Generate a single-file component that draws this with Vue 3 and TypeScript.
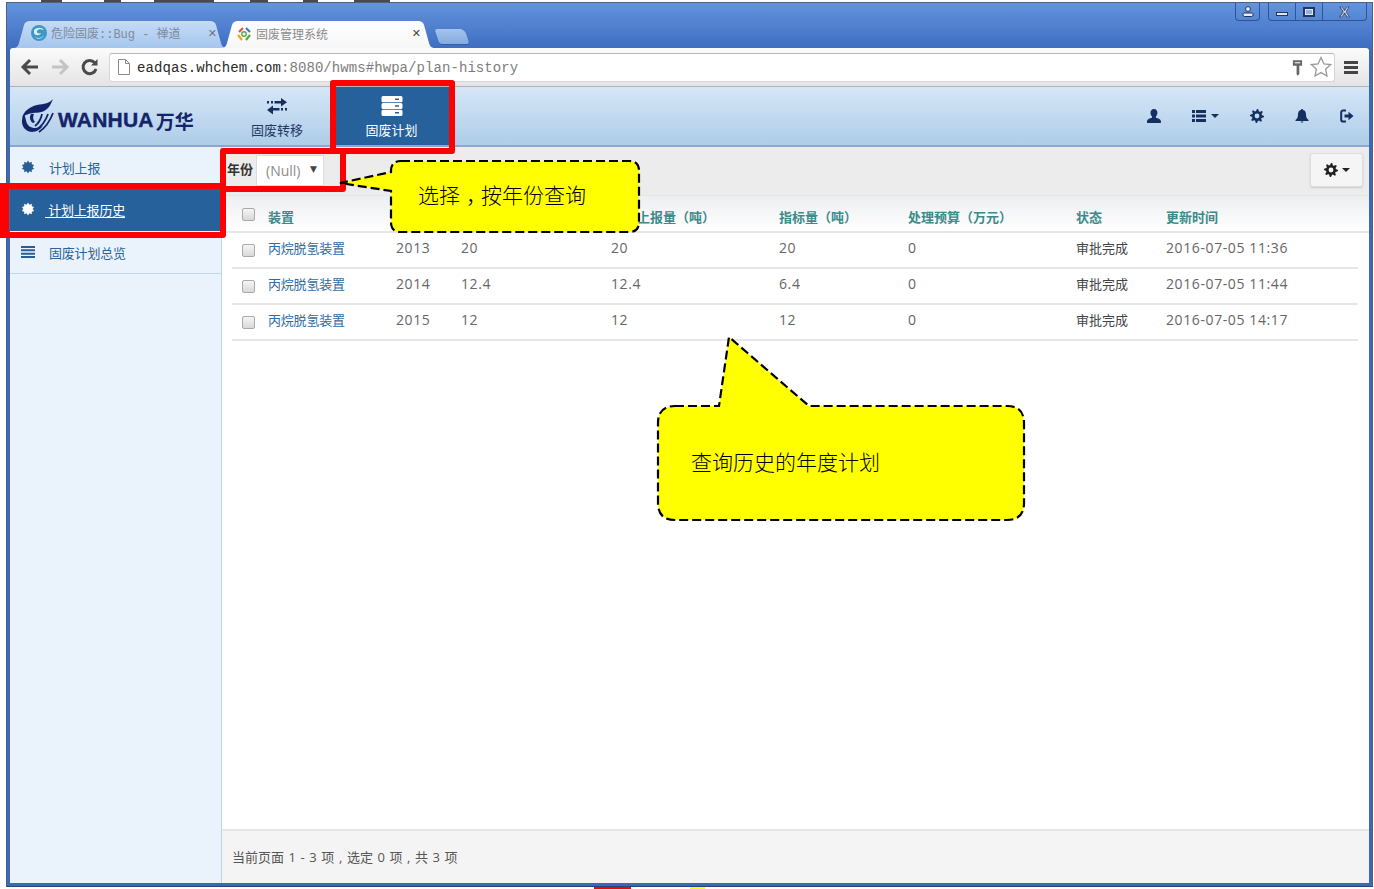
<script setup lang="ts">
type PlanRow = {
  year: string;
  planned: string;
  reported: string;
  quota: string;
  budget: string;
  updated: string;
};

const rows: PlanRow[] = [
  { year: "2013", planned: "20", reported: "20", quota: "20", budget: "0", updated: "2016-07-05 11:36" },
  { year: "2014", planned: "12.4", reported: "12.4", quota: "6.4", budget: "0", updated: "2016-07-05 11:44" },
  { year: "2015", planned: "12", reported: "12", quota: "12", budget: "0", updated: "2016-07-05 14:17" },
];

// star-like outline centred on 0,0, used for the gear and the sidebar burst
function burst(points: number[]): string {
  const step = (Math.PI * 2) / points.length;
  const coords = points.map((r, i) => {
    const a = step * i - Math.PI / 2;
    return `${(Math.cos(a) * r).toFixed(2)} ${(Math.sin(a) * r).toFixed(2)}`;
  });
  return `M${coords.join("L")}Z`;
}

const gearOuter = burst(Array.from({ length: 32 }, (_, i) => (i % 4 < 2 ? 7 : 5)));
const gearPath = `${gearOuter}M0 -2.4A2.4 2.4 0 1 0 0 2.4A2.4 2.4 0 1 0 0 -2.4Z`;
const burstPath = burst(Array.from({ length: 20 }, (_, i) => (i % 2 === 0 ? 6.5 : 4.6)));
</script>

<template>
  <div class="screen">
    <div class="window">
      <div class="titlebar">
        <div class="tabs">
          <div class="tab tab-idle">
            <svg class="tab-icon" viewBox="0 0 16 16">
              <circle cx="8" cy="8" r="8" fill="#3f97c4" />
              <path d="M3 5c3-3 8-3 10 0-3-1-6-1-7 1s2 3 4 2c-1 3-6 3-7 0z" fill="#d6eef7" />
              <path d="M4 12c3 2 7 1 9-2-1 4-7 5-9 2z" fill="#bfe3f0" />
            </svg>
            <span class="tab-title">危险固废::Bug - 禅道</span>
            <span class="tab-close">✕</span>
          </div>
          <div class="tab tab-active">
            <svg class="tab-icon" viewBox="0 0 16 16" fill="none" stroke-width="2.2">
              <path d="M3 6l4-4" stroke="#d9534f" />
              <path d="M10 2l4 4" stroke="#3c78c8" />
              <path d="M14 9l-4 5" stroke="#5aa845" />
              <path d="M6 14l-4-5" stroke="#e8a820" />
              <circle cx="8" cy="8" r="2.2" stroke="#5aa845" stroke-width="1.4" />
            </svg>
            <span class="tab-title">固废管理系统</span>
            <span class="tab-close dark">✕</span>
          </div>
          <div class="tab-new"></div>
        </div>
        <div class="controls">
          <div class="ctl-user">
            <svg width="12" height="11" viewBox="0 0 12 11">
              <circle cx="6" cy="3" r="2.4" fill="#e8edf6" stroke="#22355f" />
              <rect x="1" y="7" width="10" height="3.5" rx="1.5" fill="#e8edf6" stroke="#22355f" />
            </svg>
          </div>
          <div class="ctl-group">
            <div class="ctl ctl-min"><span></span></div>
            <div class="ctl ctl-max"><span></span></div>
            <div class="ctl ctl-close">X</div>
          </div>
        </div>
      </div>

      <div class="browserbar">
        <svg class="bar-icon" viewBox="0 0 20 20" fill="none" stroke="#4a4a4a" stroke-width="3">
          <path d="M18 10H4M10 3l-7 7 7 7" />
        </svg>
        <svg class="bar-icon" viewBox="0 0 20 20" fill="none" stroke="#c4c4c4" stroke-width="3">
          <path d="M2 10h14M10 3l7 7-7 7" />
        </svg>
        <svg class="bar-icon" viewBox="0 0 20 20" fill="none" stroke="#4a4a4a" stroke-width="3">
          <path d="M16 12a6.6 6.6 0 1 1-1.4-6.4" />
          <path d="M17.5 2v6.5H11" fill="#4a4a4a" stroke="none" />
        </svg>
        <div class="omnibox">
          <svg class="page-icon" viewBox="0 0 14 18" fill="#fff" stroke="#8a8a8a">
            <path d="M1.5 1.5h7l4 4v11h-11zM8.5 1.5v4h4" />
          </svg>
          <span class="url"><span class="url-host">eadqas.whchem.com</span>:8080/hwms#hwpa/plan-history</span>
          <svg class="key-icon" viewBox="0 0 12 18">
            <path d="M1 1h10v6H8v9l-2 2-1-2V7H1z" fill="#666" />
            <rect x="3" y="3" width="6" height="1.5" fill="#ddd" />
          </svg>
          <svg class="star-icon" viewBox="0 0 22 22" fill="#fff" stroke="#9a9a9a" stroke-width="1.3">
            <path d="M11 1.5l2.9 6.3 6.7.8-5 4.6 1.4 6.8L11 16.6 5 20l1.4-6.8-5-4.6 6.7-.8z" />
          </svg>
        </div>
        <div class="hamburger"><span></span><span></span><span></span></div>
      </div>

      <header class="appbar">
        <div class="logo">
          <svg class="logo-mark" viewBox="0 0 34 34" fill="#14246a">
            <path d="M32 0C29 4 23 5 16 6 8 8 3 12 1 19 6 14 12 14 18 13.500 25 13 29 8 32 0z" />
            <path d="M3 15C-1 22 1 30 8 32.500 13 34 19 31.500 22 26.500 18 29.500 12 30 8 27 5 25 5 19 3 15z" />
            <path d="M13 15c-1.500 3-1 6 1 8l-2 1c-3-2-4-6-2-9z" />
            <g fill="none" stroke="#14246a" stroke-width="1.800">
              <path d="M32 14C29 22 24 29 18 33" />
              <path d="M27 15C25 21 21 27 15 31" />
              <path d="M21 15C20 20 18 24 14 27" />
            </g>
          </svg>
          <span class="logo-word">WANHUA</span>
          <span class="logo-cn">万华</span>
        </div>
        <nav class="appnav">
          <a class="appnav-item">
            <svg class="nav-icon" viewBox="0 0 20 18" fill="#14305f">
              <path d="M0 3h2v2.500H0zM4 3h2v2.500H4zM7.500 3H14V0l6 4.200-6 4.300V5.500H7.500zM18 10h2v2.500h-2zM14 10h2v2.500h-2zM12.500 10H6V7.500L0 12l6 4.500V12.500h6.500z" />
            </svg>
            <span>固废转移</span>
          </a>
          <a class="appnav-item is-active">
            <svg class="nav-icon" viewBox="0 0 22 20" fill="#fff">
              <path d="M2 0h18a1.500 1.500 0 0 1 1.500 1.500v3.500A1.500 1.500 0 0 1 20 6.300H2A1.500 1.500 0 0 1 .5 5V1.500A1.500 1.500 0 0 1 2 0zM14 2.500v1.500h4V2.500z" fill-rule="evenodd" />
              <path d="M2 7h18a1.500 1.500 0 0 1 1.500 1.500v3A1.500 1.500 0 0 1 20 13H2a1.500 1.500 0 0 1-1.500-1.500v-3A1.500 1.500 0 0 1 2 7zM14 9.300v1.500h4V9.300z" fill-rule="evenodd" />
              <path d="M2 13.700h18a1.500 1.500 0 0 1 1.500 1.500v3.300A1.500 1.500 0 0 1 20 20H2a1.500 1.500 0 0 1-1.500-1.500v-3.300A1.500 1.500 0 0 1 2 13.700zM14 16v1.500h4V16z" fill-rule="evenodd" />
            </svg>
            <span>固废计划</span>
          </a>
        </nav>
        <div class="appbar-tools">
          <svg class="tool tool-user" viewBox="0 0 14 14" fill="#14305f">
            <path d="M7 0c2.300 0 3.400 1.800 3.400 3.800 0 1.600-.7 3-1.500 3.700v1.200c2.500.8 5 1.500 5 3.300v2H0v-2c0-1.800 2.500-2.500 5-3.300V7.500C4.200 6.800 3.500 5.400 3.500 3.800 3.500 1.800 4.700 0 7 0z" />
          </svg>
          <div class="tool-list">
            <svg class="tool-list-icon" viewBox="0 0 14 12" fill="#14305f">
              <path d="M0 0h3v3H0zM4 0h10v3H4zM0 4.500h3v3H0zM4 4.500h10v3H4zM0 9h3v3H0zM4 9h10v3H4z" />
            </svg>
            <i class="caret"></i>
          </div>
          <svg class="tool tool-gear" viewBox="-7 -7 14 14" fill="#14305f">
            <path :d="gearPath" fill-rule="evenodd" />
          </svg>
          <svg class="tool tool-bell" viewBox="0 0 14 14" fill="#14305f">
            <path d="M7 0c.6 0 1 .4 1 1 2.200.5 3 2.300 3 4.500 0 3 1 4.200 2.500 5.500V12H.5v-1C2 9.700 3 8.500 3 5.500 3 3.300 3.800 1.500 6 1c0-.6.4-1 1-1zM5.500 12.500h3L7 14z" />
          </svg>
          <svg class="tool tool-exit" viewBox="0 0 14 14">
            <path d="M6 1.500H3A1.800 1.800 0 0 0 1.200 3.300v7.400A1.800 1.800 0 0 0 3 12.500h3" fill="none" stroke="#14305f" stroke-width="2" />
            <path d="M4.500 5.500H8.500V2.800L13.500 7l-5 4.200V8.500h-4z" fill="#14305f" />
          </svg>
        </div>
      </header>

      <div class="body">
        <aside class="sidebar">
          <a class="side-item">
            <svg class="side-icon" viewBox="-7 -7 14 14" fill="#2a5f95"><path :d="burstPath" /></svg>
            <span>计划上报</span>
          </a>
          <a class="side-item is-current">
            <svg class="side-icon" viewBox="-7 -7 14 14" fill="#fff"><path :d="burstPath" /></svg>
            <span class="side-link"> 计划上报历史</span>
          </a>
          <a class="side-item">
            <svg class="side-icon" viewBox="0 0 14 12" fill="#2a5f95">
              <path d="M0 0h14v2H0zM0 3.300h14v2H0zM0 6.700h14v2H0zM0 10h14v2H0z" />
            </svg>
            <span>固废计划总览</span>
          </a>
        </aside>

        <main class="content">
          <div class="filterbar">
            <label class="filter-label">年份</label>
            <div class="filter-select">
              <span>(Null)</span>
              <span class="filter-arrow">▼</span>
            </div>
            <button type="button" class="gear-btn">
              <svg width="14" height="14" viewBox="-7 -7 14 14" fill="#222">
                <path :d="gearPath" fill-rule="evenodd" />
              </svg>
              <i class="caret dark"></i>
            </button>
          </div>

          <div class="grid-wrap">
            <table class="grid">
              <colgroup>
                <col class="c-check" />
                <col class="c-name" />
                <col class="c-year" />
                <col class="c-plan" />
                <col class="c-report" />
                <col class="c-quota" />
                <col class="c-budget" />
                <col class="c-state" />
                <col />
              </colgroup>
              <thead>
                <tr>
                  <th class="check-cell"><span class="check"></span></th>
                  <th>装置</th>
                  <th>年份</th>
                  <th>计划量</th>
                  <th>计划上报量（吨）</th>
                  <th>指标量（吨）</th>
                  <th>处理预算（万元）</th>
                  <th>状态</th>
                  <th>更新时间</th>
                </tr>
              </thead>
              <tbody>
                <tr v-for="row in rows" :key="row.year">
                  <td class="check-cell"><span class="check"></span></td>
                  <td class="name-cell">丙烷脱氢装置</td>
                  <td>{{ row.year }}</td>
                  <td>{{ row.planned }}</td>
                  <td>{{ row.reported }}</td>
                  <td>{{ row.quota }}</td>
                  <td>{{ row.budget }}</td>
                  <td class="state-cell">审批完成</td>
                  <td>{{ row.updated }}</td>
                </tr>
              </tbody>
            </table>
          </div>

          <footer class="pager">当前页面 1 - 3 项 , 选定 0 项 , 共 3 项</footer>
        </main>
      </div>
    </div>

    <!-- annotations drawn over the screenshot -->
    <svg class="notes" width="1374" height="889" viewBox="0 0 1374 889">
      <g fill="#4a4a4a">
        <rect x="41" y="0" width="21" height="2" />
        <rect x="104" y="0" width="17" height="2" />
        <rect x="154" y="0" width="60" height="2" />
        <rect x="250" y="0" width="18" height="2" />
        <rect x="303" y="0" width="15" height="2" />
        <rect x="354" y="0" width="36" height="2" />
      </g>
      <rect x="594" y="887" width="37" height="2" fill="#f00" />
      <rect x="690" y="887" width="15" height="2" fill="#ff0" />

      <g fill="none" stroke="#f00" stroke-width="6" stroke-linejoin="round">
        <rect x="333" y="83" width="119" height="68" />
        <rect x="223" y="151" width="120" height="38" />
      </g>
      <path d="M1 186H223V235H1Z" fill="none" stroke="#f00" stroke-width="6" stroke-linejoin="round" />
      <rect x="0" y="189" width="9" height="43" fill="#f00" />

      <g fill="#ff0" stroke="#000" stroke-width="2.200" stroke-dasharray="9 4">
        <path d="M401 161H629Q639 161 639 171V222Q639 232 629 232H401Q391 232 391 222V191L340 183L391 172V171Q391 161 401 161Z" />
        <path d="M675 406H719L729 337L809 406H1007Q1024 406 1024 423V503Q1024 520 1007 520H675Q658 520 658 503V423Q658 406 675 406Z" />
      </g>
      <text class="note-text" x="418" y="203">选择<tspan dx="6">，</tspan><tspan dx="-6">按年份查询</tspan></text>
      <text class="note-text" x="691" y="470">查询历史的年度计划</text>
    </svg>
  </div>
</template>

<style>
html,
body {
  margin: 0;
  background: #fff;
}
</style>

<style scoped>
.screen {
  position: relative;
  width: 1374px;
  height: 889px;
  box-sizing: border-box;
  padding: 2px 1px 2px 6px;
  overflow: hidden;
  background: #fff;
  font-family: "Open Sans", "Noto Sans CJK SC", sans-serif;
  font-size: 13px;
}

.window {
  display: flex;
  flex-direction: column;
  height: 100%;
  box-sizing: border-box;
  padding: 0 3px 3px;
  border: 1px solid #4e5f80;
  border-bottom-color: #27447c;
  background: linear-gradient(#6394dc 0, #3c6bc0 48px, #3c69b5 49px);
}

.titlebar {
  display: flex;
  justify-content: space-between;
  height: 45px;
  flex: 0 0 auto;
}

.tabs {
  display: flex;
  align-items: flex-end;
  padding-left: 3px;
}

.tab {
  display: flex;
  align-items: center;
  gap: 4px;
  width: 214px;
  height: 27px;
  box-sizing: border-box;
  padding: 0 8px 3px 18px;
  margin-right: -6px;
  clip-path: path("M0 27C3 27 5 26 6 22L11 4C12 1 14 0 17 0H197C200 0 202 1 203 4L208 22C209 26 211 27 214 27Z");
}

.tab-idle {
  background: linear-gradient(#c5dbf6, #a6c6ee);
  color: #7f8b9b;
}

.tab-active {
  background: linear-gradient(#fff, #f6f6f6);
  color: #8a8a8a;
  padding-left: 15px;
  height: 28px;
  margin-bottom: -1px;
  position: relative;
}

.tab-icon {
  width: 16px;
  height: 16px;
  flex: 0 0 auto;
}

.tab-title {
  flex: 1;
  font-size: 12px;
  white-space: nowrap;
  font-family: "Liberation Mono", "Noto Sans CJK SC", sans-serif;
}

.tab-close {
  font-family: "DejaVu Sans", sans-serif;
  font-size: 11px;
  font-weight: 700;
  margin-right: 2px;
  color: #6a7484;
}

.tab-close.dark {
  margin-right: 6px;
  color: #444;
}

.tab-new {
  width: 30px;
  height: 15px;
  margin: 0 0 4px 8px;
  border-radius: 3px 5px 3px 3px;
  background: linear-gradient(#a4c3ec, #86abe0);
  box-shadow: 0 1px 0 #355ea8;
  transform: skewX(18deg);
}

.controls {
  display: flex;
  gap: 8px;
  margin-right: 2px;
  height: 18px;
  align-items: flex-start;
}

.ctl-user {
  display: flex;
  align-items: center;
  justify-content: center;
  width: 25px;
  height: 18px;
  box-sizing: border-box;
  border: 1px solid #2f5397;
  border-top: 0;
  border-radius: 0 0 4px 4px;
}

.ctl-group {
  display: flex;
  height: 18px;
  box-sizing: border-box;
  border: 1px solid #2f5397;
  border-top: 0;
  border-radius: 0 0 4px 4px;
}

.ctl {
  display: flex;
  align-items: center;
  justify-content: center;
  width: 26px;
  border-right: 1px solid #2f5397;
}

.ctl-close {
  width: 43px;
  border-right: 0;
  color: #eef2f8;
  font: 700 15px "Liberation Sans", sans-serif;
  -webkit-text-stroke: 0.7px #24365e;
}

.ctl-min span {
  display: block;
  width: 12px;
  height: 4px;
  margin-top: 5px;
  box-sizing: border-box;
  border: 1px solid #24365e;
  background: #dfe6f2;
}

.ctl-max span {
  display: block;
  width: 12px;
  height: 10px;
  box-sizing: border-box;
  border: 2px solid #24365e;
  background: #8fb0e0;
  outline: 1px solid #dfe6f2;
  outline-offset: -3px;
}

.browserbar {
  display: flex;
  align-items: center;
  height: 39px;
  flex: 0 0 auto;
  box-sizing: border-box;
  padding: 0 11px 0 10px;
  gap: 10px;
  border-radius: 3px 3px 0 0;
  border-bottom: 1px solid #b2b2b2;
  background: linear-gradient(#fbfbfb, #e4e4e4);
}

.bar-icon {
  width: 20px;
  height: 20px;
  flex: 0 0 auto;
}

.omnibox {
  display: flex;
  align-items: center;
  flex: 1;
  height: 29px;
  margin-left: -1px;
  box-sizing: border-box;
  padding: 0 2px 0 7px;
  border: 1px solid #d6d6d6;
  border-top-color: #b8b8b8;
  border-radius: 3px;
  background: #fff;
}

.page-icon {
  width: 14px;
  height: 18px;
  flex: 0 0 auto;
}

.url {
  flex: 1;
  margin: 2px 0 0 6px;
  color: #7d7d7d;
  font: 14px "Liberation Mono", monospace;
  letter-spacing: 0.07px;
  white-space: nowrap;
}

.url-host {
  color: #2a2a2a;
}

.key-icon {
  width: 11px;
  height: 17px;
  margin-right: 7px;
}

.star-icon {
  width: 22px;
  height: 22px;
}

.hamburger {
  display: flex;
  flex-direction: column;
  gap: 2px;
  margin-left: -1px;
  width: 14px;
}

.hamburger span {
  height: 3px;
  background: #444;
}

.appbar {
  display: flex;
  align-items: stretch;
  height: 60px;
  flex: 0 0 auto;
  box-sizing: border-box;
  border-bottom: 2px solid #8da7d2;
  background: linear-gradient(#d6e6f8, #aecde8);
}

.logo {
  display: flex;
  align-items: center;
  width: 211px;
  box-sizing: border-box;
  padding: 0 0 0 12px;
  color: #14246a;
  white-space: nowrap;
}

.logo-mark {
  width: 34px;
  height: 34px;
  margin: 0 3px 0 -1px;
}

.logo-word {
  margin-top: 8px;
  font: 700 21px "Liberation Sans", sans-serif;
  letter-spacing: 0.2px;
  -webkit-text-stroke: 0.4px #14246a;
}

.logo-cn {
  margin: 8px 0 0 2px;
  font: 700 19px "Noto Sans CJK SC", sans-serif;
}

.appnav {
  display: flex;
}

.appnav-item {
  display: flex;
  flex-direction: column;
  align-items: center;
  justify-content: flex-end;
  gap: 4px;
  width: 112px;
  padding-bottom: 6px;
  box-sizing: border-box;
  color: #1d3a63;
  font-size: 13px;
}

.appnav-item.is-active {
  width: 115px;
  margin-left: 1px;
  background: #26619c;
  color: #fff;
}

.nav-icon {
  width: 20px;
  height: 18px;
}

.is-active .nav-icon {
  width: 22px;
  height: 20px;
}

.appbar-tools {
  display: flex;
  align-items: center;
  gap: 31px;
  margin-left: auto;
  padding: 0 15px 0 0;
}

.tool {
  width: 14px;
  height: 14px;
}

.tool-list {
  display: flex;
  align-items: center;
  gap: 5px;
}

.tool-list-icon {
  width: 14px;
  height: 12px;
}

.caret {
  display: block;
  width: 0;
  height: 0;
  border: 4px solid transparent;
  border-top-color: #14305f;
  border-bottom: 0;
}

.caret.dark {
  border-top-color: #222;
}

.body {
  display: flex;
  flex: 1;
  min-height: 0;
}

.sidebar {
  width: 212px;
  flex: 0 0 auto;
  box-sizing: border-box;
  border-right: 1px solid #bdd4ea;
  background: #eaf3fb;
  color: #2a6398;
}

.side-item {
  display: flex;
  align-items: center;
  height: 40px;
  box-sizing: border-box;
  padding-left: 11px;
  gap: 14px;
}

.side-item:last-child {
  height: 43px;
  border-bottom: 1px solid #c2d6e9;
}

.side-item span {
  letter-spacing: -0.2px;
}

.side-item.is-current {
  height: 44px;
  gap: 10px;
  background: #26619c;
  color: #fff;
}

.side-link {
  white-space: pre;
  text-decoration: underline;
  text-underline-offset: 2px;
}

.side-icon {
  width: 14px;
  height: 14px;
  flex: 0 0 auto;
}

.content {
  display: flex;
  flex-direction: column;
  flex: 1;
  min-width: 0;
  background: #fff;
}

.filterbar {
  display: flex;
  align-items: center;
  height: 49px;
  flex: 0 0 auto;
  box-sizing: border-box;
  padding: 0 6px 2px 5px;
  border-bottom: 1px solid #e6e6e6;
  background: #ececec;
}

.filter-label {
  font-weight: 700;
  color: #333;
  margin: 0 3px 3px 0;
}

.filter-select {
  display: flex;
  align-items: center;
  justify-content: space-between;
  width: 68px;
  height: 31px;
  box-sizing: border-box;
  padding: 0 6px 0 9px;
  border: 1px solid #dcdcdc;
  background: #fff;
  color: #8a8a8a;
  font-size: 14px;
}

.filter-arrow {
  font: 9px "DejaVu Sans", sans-serif;
  color: #444;
  margin-bottom: 3px;
}

.gear-btn {
  display: flex;
  align-items: center;
  justify-content: center;
  gap: 4px;
  width: 53px;
  height: 34px;
  margin: 0 0 1px auto;
  padding: 0;
  border: 1px solid #dedede;
  border-radius: 3px;
  background: #f5f5f5;
  box-shadow: 0 1px 2px #c8c8c8;
}

.grid-wrap {
  flex: 0 0 auto;
  /* the header band runs the full width, the rows stop short of it */
  background:
    linear-gradient(#e6e6e6, #e6e6e6) 0 35px / 100% 2px no-repeat,
    linear-gradient(#eceef1, #fff) 0 0 / 100% 35px no-repeat;
}

.grid {
  width: 1126px;
  margin-left: 10px;
  border-collapse: collapse;
  table-layout: fixed;
  color: #666;
  font-size: 14px;
  letter-spacing: 0.6px;
}

.c-check { width: 36px; }
.c-name { width: 128px; }
.c-year { width: 65px; }
.c-plan { width: 150px; }
.c-report { width: 168px; }
.c-quota { width: 129px; }
.c-budget { width: 168px; }
.c-state { width: 90px; }

.grid thead tr {
  height: 36px;
}

.grid th {
  padding: 6px 0 0;
  border-bottom: 2px solid #e6e6e6;
  color: #3c8a8a;
  font-size: 13px;
  font-weight: 700;
  letter-spacing: 0;
  text-align: left;
  white-space: nowrap;
}

.grid tbody tr {
  height: 36px;
}

.grid td {
  padding: 0 0 6px;
  border-bottom: 2px solid #e6e6e6;
  white-space: nowrap;
}

.grid th.check-cell {
  padding: 2px 0 0 10px;
  line-height: 0;
}

.grid td.check-cell {
  padding: 0 0 0 10px;
  line-height: 0;
}

.check {
  display: inline-block;
  width: 13px;
  height: 13px;
  box-sizing: border-box;
  border: 1px solid #aaa;
  border-radius: 2px;
  background: linear-gradient(#f5f5f5, #d8d8d8);
}

.grid td.name-cell {
  padding-bottom: 6px;
  color: #2f6ba5;
  font-size: 13px;
  letter-spacing: -0.2px;
}

.grid td.state-cell {
  padding-bottom: 6px;
  color: #444;
  font-size: 13px;
  letter-spacing: 0;
}

.pager {
  display: flex;
  align-items: center;
  height: 54px;
  flex: 0 0 auto;
  margin-top: auto;
  box-sizing: border-box;
  padding: 0 0 2px 10px;
  border-top: 2px solid #e6e6e6;
  background: #f4f4f4;
  color: #555;
  font-size: 13px;
  word-spacing: 1.200px;
}

.notes {
  position: absolute;
  top: 0;
  left: 0;
  pointer-events: none;
}

.note-text {
  fill: #000;
  font-family: "Noto Sans CJK SC", sans-serif;
  font-size: 21px;
  font-weight: 300;
}
</style>
